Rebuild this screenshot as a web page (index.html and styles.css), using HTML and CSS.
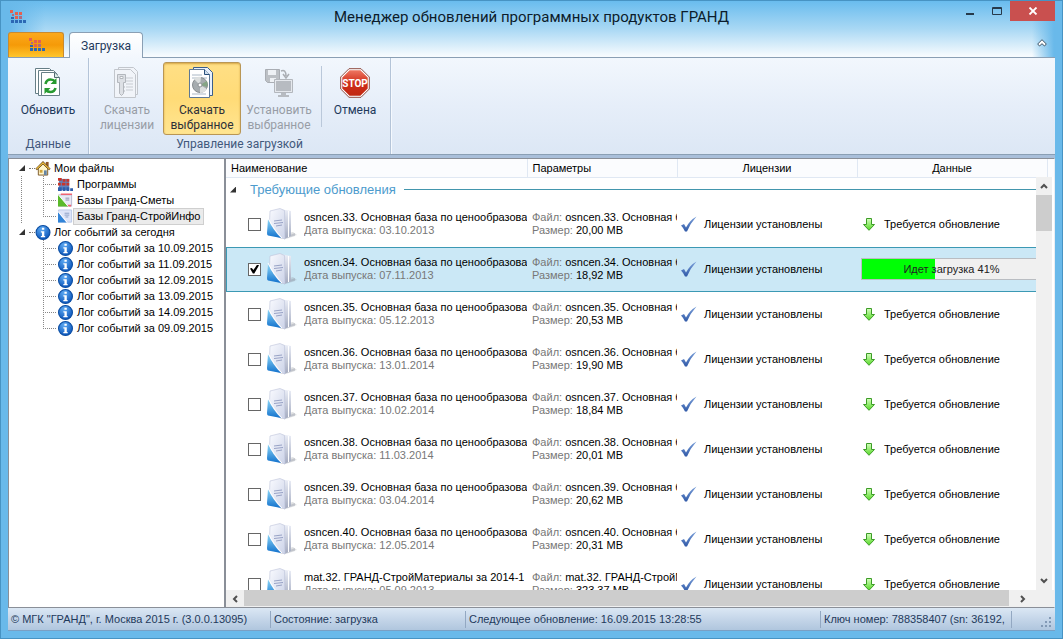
FILE: index.html
```html
<!DOCTYPE html>
<html lang="ru">
<head>
<meta charset="utf-8">
<title>Менеджер обновлений программных продуктов ГРАНД</title>
<link rel="stylesheet" href="styles.css">
</head>
<body>
<svg class="defs" aria-hidden="true">
  <defs>
    <linearGradient id="gPage" x1="0" y1="0" x2="1" y2="1"><stop offset="0" stop-color="#fafbff"/><stop offset="1" stop-color="#ccd3e8"/></linearGradient>
    <linearGradient id="gSide" x1="0" y1="0" x2="0" y2="1"><stop offset="0" stop-color="#eceff8"/><stop offset="1" stop-color="#a3aabf"/></linearGradient>
    <linearGradient id="gBlue" x1="0" y1="0" x2="0" y2="1"><stop offset="0" stop-color="#8fd8f8"/><stop offset="1" stop-color="#1272cd"/></linearGradient>
    <linearGradient id="gCheck" x1="0" y1="0" x2="0" y2="1"><stop offset="0" stop-color="#7ba0da"/><stop offset="1" stop-color="#315aa8"/></linearGradient>
    <linearGradient id="gStop" x1="0" y1="0" x2="0" y2="1"><stop offset="0" stop-color="#ee7661"/><stop offset=".5" stop-color="#cf2d19"/><stop offset="1" stop-color="#c02812"/></linearGradient>
    <linearGradient id="gArrow" x1="0" y1="0" x2="0" y2="1"><stop offset="0" stop-color="#d5ffbe"/><stop offset="1" stop-color="#54d824"/></linearGradient>
    <radialGradient id="gInfo" cx=".4" cy=".25" r=".8"><stop offset="0" stop-color="#5eaaf2"/><stop offset="1" stop-color="#0751b8"/></radialGradient>
  </defs>
  <symbol id="logo" viewBox="0 0 16 14">
    <path fill="#e5604f" d="M0 0h3v3H0zM5 2h3v3H5zM9 2h3v3H9zM5 6h3v3H5z"/>
    <path fill="#b06a80" d="M2 4h2v2H2zM9 6h3v3H9z"/>
    <path fill="#2c68b4" d="M1 7h3v2H1zM1 10h3v3H1zM5 10h3v3H5zM9 10h3v3H9zM13 10h3v3h-3z"/>
  </symbol>
  <symbol id="book" viewBox="0 0 30 32">
    <path fill="#8b8e98" opacity=".28" d="M14 31 30 27 26 24 10 28z"/>
    <path fill="#7f8494" opacity=".3" d="M17 31.500 28 28V25l-10 4z"/>
    <path fill="url(#gSide)" d="M13 1 24 3 24 28 17 31z"/>
    <path stroke="#fff" fill="none" d="M21.500 3v26"/>
    <path fill="url(#gPage)" stroke="#bcc3da" stroke-width=".6" d="M3 3 13 .500 17.500 2.500 18 31 15 30 2 26z"/>
    <path stroke="#8f9abf" stroke-width=".9" fill="none" d="m7 13 8-1M7 15.500l9-1M9 18l6-1"/>
    <path fill="url(#gBlue)" d="M1 11c3 7 8 14 13 19L1 27.500Q0 27 0 25z"/>
    <path stroke="#fff" stroke-width="1" fill="none" d="M1 10c4 8 9 15 14 20"/>
  </symbol>
  <symbol id="check" viewBox="0 0 16 16">
    <path fill="url(#gCheck)" d="M0 9.500 3 8l2 3.500Q9 4 15.500.500 9.500 7 6 15.500H4Q2.500 12 0 9.500z"/>
  </symbol>
  <symbol id="down" viewBox="0 0 12 13">
    <path fill="url(#gArrow)" stroke="#3c9c26" d="M3.500.500h5v6h3L6 12.300.500 6.500h3z"/>
  </symbol>
  <symbol id="info" viewBox="0 0 14 14">
    <circle cx="7" cy="7" r="6.500" fill="url(#gInfo)" stroke="#0b4da2"/>
    <path fill="#fff" d="M6 2.500h2.200v2H6zM5 5.800h3.200v4.400H9v1.300H5v-1.300h1V7H5z"/>
  </symbol>
  <symbol id="home" viewBox="0 0 16 16">
    <path fill="#8d5729" d="M11 1h3v5h-3z"/>
    <path fill="#fff6cc" stroke="#7c5522" d="M3 8 8 3l5 5v7H3z"/>
    <path fill="#6585a5" d="M9 10h3v5H9z"/><path fill="#d0a23a" d="M4.500 9.500h3v3h-3z"/>
    <path fill="none" stroke="#63431c" stroke-width="2.400" d="M.700 9 8 1.700 15.300 9"/><path fill="none" stroke="#f3c440" stroke-width="1.200" d="M1 8.700 8 1.900 15 8.700"/>
  </symbol>
  <symbol id="blocks" viewBox="0 0 16 14">
    <path fill="#5f83bd" d="M1 1h11v12H1z"/>
    <path fill="#ca3428" d="M0 0h4v3H0zM5 1h3v3H5zM4 5h4v3H4zM9 1h3v3H9zM0 5h3v3H0zM9 5h3v3H9z"/>
    <path fill="#2d5dab" d="M0 10h4v4H0zM5 10h3v4H5zM9 10h3v4H9zM13 11h3v3h-3z"/>
  </symbol>
  <symbol id="green-base" viewBox="0 0 16 15">
    <path fill="#e9e9f5" stroke="#b7b9d0" d="M.500 1.500h14v12H.500z"/><path fill="#ef6473" d="M3 0h12v1.500H3zM10 12h4v2h-4z"/>
    <path stroke="#8a91ad" d="M8 5h4M8 7h4"/><path fill="#5aba29" d="M0 1 11 14H0z"/><path stroke="#fff" d="m0 1 11 13"/>
  </symbol>
  <symbol id="blue-base" viewBox="0 0 16 15">
    <path fill="#dde4f8" stroke="#bac8e5" d="M.500.500h14v13H.500z"/><path stroke="#8a9dc2" d="M7 4h5M7 6h5M8 8h3"/>
    <path fill="#3184d8" d="M0 3 9 14H0z"/><path stroke="#fff" d="m0 2 10 12"/>
  </symbol>
  <symbol id="refresh" viewBox="0 0 28 32">
    <g fill="#fff" stroke="#667e86"><path d="M1.500 1.500h14l4 4v21h-18z"/><path d="M4.500 3.500h15l4 4v21h-19z"/><path d="M7.500 5.500h13l5 5v18h-18z"/></g>
    <path fill="#dcebe8" stroke="#526a70" d="M20.500 5.500v5h5"/>
    <path fill="none" stroke="#279a30" stroke-width="2.600" d="M11.500 17q1-4.500 5-4.500 3 0 4.500 2M21.500 21q-1 4-5 4-3 0-4.500-2"/>
    <path fill="#279a30" d="M22.500 11v6h-6zM10.500 27v-6h6z"/>
  </symbol>
  <symbol id="license" viewBox="0 0 28 32">
    <g fill="#f1f4f9" stroke="#c2c6cc"><path d="M5.500.500h15l4 4v23h-19z"/><path d="M1.500 2.500h16l5 5v23h-21z"/></g>
    <path stroke="#c7cbd1" d="M13 11h7M13 14h7M13 17h7M13 20h7M13 23h7"/>
    <path fill="#dde0e5" stroke="#b3b7bd" d="M4.500 7.500h8v8h-2v11l-2 2-2-2v-11h-2z"/><path fill="#fff" stroke="#b3b7bd" d="M7 9.500h3v2H7z"/><path stroke="#b3b7bd" d="M10 20h2M10 24h2"/>
  </symbol>
  <symbol id="disc" viewBox="0 0 28 32">
    <path fill="#e8f0fc" stroke="#3b5e8a" d="M5.500.500h14l5 5v23h-19z"/>
    <path fill="#fff" stroke="#5d7894" d="M1.500 2.500h15l5 5v23h-20z"/><path fill="#cedded" stroke="#294f7c" d="M16.500 2.500v5h5"/>
    <path stroke="#aab7c5" d="M4 8h10M4 11h15M4 27h14"/>
    <circle cx="12" cy="18" r="7.500" fill="#a6acaf" stroke="#888d91"/><path fill="#dcdfdf" d="M12 18 6 12q3-3 7-2zM12 18l7 4q-2 4-7 4z"/><path fill="#85a585" d="m12 18 7-4q1 3 0 6z"/><circle cx="12" cy="18" r="2" fill="#fff" stroke="#8a8e91"/>
  </symbol>
  <symbol id="install" viewBox="0 0 30 30">
    <path fill="#bcc0c5" stroke="#a9adb3" d="M1.500 1.500h14v13h-12l-2-2z"/><path fill="#eef1f5" d="M4 2h8v5H4zM6 10h6v4H6z"/>
    <path fill="none" stroke="#a9adb3" stroke-width="1.500" d="M17 3q5-2 5 5m-3-2 3 4 3-4"/>
    <path fill="#e5e8ed" stroke="#b3b7bd" d="M10.500 11.500h18v13h-18z"/><path fill="#b7bbc1" d="M12 13h15v10H12zM17 25h5v2h3v2H14v-2h3z"/>
  </symbol>
  <symbol id="stop" viewBox="0 0 30 30">
    <path fill="#fff" stroke="#8e4a40" d="M9 .700h12L29.300 9v12L21 29.300H9L.700 21V9z"/><path fill="url(#gStop)" d="M9.600 2.300h10.800l7.300 7.300v10.800l-7.300 7.300H9.600l-7.300-7.300V9.600z"/>
    <text x="15" y="19" text-anchor="middle" class="stop-text">STOP</text>
  </symbol>
</svg>

<main class="window">
  <header class="titlebar">
    <svg class="app-icon"><use href="#logo"/></svg>
    <h1>Менеджер обновлений программных продуктов ГРАНД</h1>
    <div class="window-buttons">
      <button aria-label="Свернуть"><svg viewBox="0 0 10 8"><path fill="#26394a" d="M1 6h8v2H1z"/></svg></button>
      <button aria-label="Развернуть"><svg viewBox="0 0 10 8"><path fill="none" stroke="#26394a" d="M.500.500h9v7h-9zM0 1.500h10"/></svg></button>
      <button class="close" aria-label="Закрыть"><svg viewBox="0 0 10 8"><path fill="none" stroke="#fff" stroke-width="1.800" d="m1.500.500 7 7m0-7-7 7"/></svg></button>
    </div>
  </header>
  <nav class="tabs">
    <button class="app-menu" aria-label="Меню"><svg class="app-icon"><use href="#logo"/></svg></button>
    <button class="tab">Загрузка</button>
    <button class="collapse" aria-label="Свернуть ленту"><svg viewBox="0 0 10 8"><path fill="#fff" stroke="#3e5366" d="M5 .700 9.300 5 7.500 7 5 4.700 2.500 7 .700 5z"/></svg></button>
  </nav>
  <section class="ribbon">
    <div class="group">
      <div class="tools"><button class="tool"><svg><use href="#refresh"/></svg>Обновить</button></div>
      <div class="caption">Данные</div>
    </div>
    <div class="group">
      <div class="tools">
        <button class="tool narrow" disabled><svg><use href="#license"/></svg>Скачать<br>лицензии</button>
        <button class="tool active"><svg><use href="#disc"/></svg>Скачать<br>выбранное</button>
        <button class="tool" disabled><svg><use href="#install"/></svg>Установить<br>выбранное</button>
        <span class="divider"></span>
        <button class="tool cancel"><svg><use href="#stop"/></svg>Отмена</button>
      </div>
      <div class="caption">Управление загрузкой</div>
    </div>
  </section>
  <div class="workspace">
    <aside class="tree">
      <ul>
        <li>
          <div class="node root"><i class="expander"></i><svg><use href="#home"/></svg><span>Мои файлы</span></div>
          <ul>
            <li class="node"><svg><use href="#blocks"/></svg><span>Программы</span></li>
            <li class="node"><svg><use href="#green-base"/></svg><span>Базы Гранд-Сметы</span></li>
            <li class="node selected"><svg><use href="#blue-base"/></svg><span>Базы Гранд-СтройИнфо</span></li>
          </ul>
        </li>
        <li>
          <div class="node root"><i class="expander"></i><svg><use href="#info"/></svg><span>Лог событий за сегодня</span></div>
          <ul>
            <li class="node"><svg><use href="#info"/></svg><span>Лог событий за 10.09.2015</span></li>
            <li class="node"><svg><use href="#info"/></svg><span>Лог событий за 11.09.2015</span></li>
            <li class="node"><svg><use href="#info"/></svg><span>Лог событий за 12.09.2015</span></li>
            <li class="node"><svg><use href="#info"/></svg><span>Лог событий за 13.09.2015</span></li>
            <li class="node"><svg><use href="#info"/></svg><span>Лог событий за 14.09.2015</span></li>
            <li class="node"><svg><use href="#info"/></svg><span>Лог событий за 09.09.2015</span></li>
          </ul>
        </li>
      </ul>
    </aside>
    <section class="list">
      <div class="viewport">
        <table>
          <colgroup><col><col class="c-params"><col class="c-license"><col class="c-data"><col class="c-rest"></colgroup>
          <thead><tr><th>Наименование</th><th>Параметры</th><th class="center">Лицензии</th><th class="center">Данные</th><th></th></tr></thead>
          <tbody id="rows">
            <tr class="group-row"><td colspan="5"><div class="group-title"><i class="expander"></i><span>Требующие обновления</span></div></td></tr>
          </tbody>
        </table>
        <div class="vscroll">
          <button aria-label="Вверх"><svg viewBox="0 0 8 6"><path d="m1 5 3-3 3 3"/></svg></button>
          <div class="thumb"></div>
          <button aria-label="Вниз"><svg viewBox="0 0 8 6"><path d="m1 1 3 3 3-3"/></svg></button>
        </div>
      </div>
      <div class="hscroll">
        <button aria-label="Влево"><svg viewBox="0 0 6 8"><path d="M5 1 2 4l3 3"/></svg></button>
        <div class="thumb"></div>
        <button aria-label="Вправо"><svg viewBox="0 0 6 8"><path d="m1 1 3 3-3 3"/></svg></button>
      </div>
    </section>
  </div>
  <footer class="status">
    <span>© МГК "ГРАНД", г. Москва 2015 г. (3.0.0.13095)</span>
    <span>Состояние: загрузка</span>
    <span>Следующее обновление: 16.09.2015 13:28:55</span>
    <span>Ключ номер: 788358407 (sn: 36192,</span>
    <span class="grip"><svg viewBox="0 0 11 11"><path fill="#8299b5" d="M8 0h2v2H8zM4 4h2v2H4zM8 4h2v2H8zM0 8h2v2H0zM4 8h2v2H4zM8 8h2v2H8z"/></svg></span>
  </footer>
</main>
<script src="rows.js"></script>
</body>
</html>
```

FILE: rows.js
```js
const base = "Основная база по ценообразова";
const baseFile = "Основная б";
const items = [
  ["osncen.33.", base, baseFile, "03.10.2013", "20,00 MB"],
  ["osncen.34.", base, baseFile, "07.11.2013", "18,92 MB", 41],
  ["osncen.35.", base, baseFile, "05.12.2013", "20,53 MB"],
  ["osncen.36.", base, baseFile, "13.01.2014", "19,90 MB"],
  ["osncen.37.", base, baseFile, "10.02.2014", "18,84 MB"],
  ["osncen.38.", base, baseFile, "11.03.2014", "20,01 MB"],
  ["osncen.39.", base, baseFile, "03.04.2014", "20,62 MB"],
  ["osncen.40.", base, baseFile, "12.05.2014", "20,31 MB"],
  ["mat.32.", "ГРАНД-СтройМатериалы за 2014-1", "ГРАНД-СтройМ", "05.09.2013", "323,37 MB"]
];

const data = progress => progress
  ? `<div class="progress" role="progressbar" aria-valuenow="${progress}"><div class="bar" style="width:${progress}%"></div><span>Идет загрузка ${progress}%</span></div>`
  : `<div class="state"><svg class="down"><use href="#down"/></svg>Требуется обновление</div>`;

document.getElementById("rows").insertAdjacentHTML("beforeend", items.map(([code, name, file, date, size, progress]) => `
  <tr class="item${progress ? " current" : ""}">
    <td><label class="product"><input type="checkbox"${progress ? " checked" : ""}><svg class="book"><use href="#book"/></svg><span class="lines">${code} ${name}<br><small>Дата выпуска: ${date}</small></span></label></td>
    <td><div class="lines params"><small>Файл:</small> ${code} ${file}<br><small>Размер:</small> ${size}</div></td>
    <td><div class="state"><svg class="check"><use href="#check"/></svg>Лицензии установлены</div></td>
    <td>${data(progress)}</td>
    <td></td>
  </tr>`).join(""));
```

FILE: styles.css
```css
* { box-sizing: border-box; }
body {
  margin: 0;
  font: 11px/13px "Liberation Sans", Arial, sans-serif;
  color: #000;
}
button { margin: 0; padding: 0; border: 0; background: none; font: inherit; color: inherit; }
ul { list-style: none; margin: 0; padding: 0; }
svg { display: block; flex: none; }
.defs { position: absolute; width: 0; height: 0; }

.window {
  height: 100vh;
  display: flex;
  flex-direction: column;
  padding: 0 7px 7px;
  border: 1px solid #4793c3;
  background:
    linear-gradient(90deg, #69b9ea 8px, #69b9ea00 44px, #69b9ea00 calc(100% - 30px), #69b9ea calc(100% - 8px)) top / 100% 57px no-repeat,
    linear-gradient(#69bcee, #a9d8f4 28px, #f7fbfe 55px) top / 100% 57px no-repeat,
    #69b9ea;
}

/* Title bar */
.titlebar { flex: none; height: 31px; display: grid; grid-template-columns: 120px 1fr 120px; align-items: center; }
.app-icon { width: 16px; height: 14px; margin-left: 2px; }
h1 { margin: 0; text-align: center; font: 15px/20px Roboto, sans-serif; color: #0c1c2b; white-space: nowrap; }
.window-buttons { display: flex; justify-content: flex-end; align-self: start; }
.window-buttons button { width: 27px; height: 20px; display: grid; place-items: center; }
.window-buttons svg { width: 10px; height: 8px; }
.window-buttons .close { width: 45px; background: #c9504f; }

/* Tabs */
.tabs { flex: none; height: 25px; display: flex; align-items: flex-end; gap: 5px; font: 12px/16px Roboto, sans-serif; }
.app-menu {
  width: 56px; height: 25px; display: grid; place-items: center;
  border: 1px solid #c88a30; border-bottom: 0; border-radius: 3px 3px 0 0;
  background: linear-gradient(#fba91c, #f59a08 50%, #ffc62c);
}
.tab {
  height: 26px; padding: 0 11px; margin-bottom: -1px; z-index: 1; color: #1e395b;
  border: 1px solid #8a9fb4; border-bottom: 0; border-radius: 4px 4px 0 0;
  background: linear-gradient(#fff, #f2f7fd);
}
.collapse { margin: 0 8px 10px auto; }
.collapse svg { width: 10px; height: 8px; }

/* Ribbon */
.ribbon {
  flex: none; height: 98px; display: flex; color: #1e395b;
  font: 12px/15px Roboto, sans-serif;
  border: 1px solid #8a9fb4; border-width: 1px 0;
  background: linear-gradient(#f2f7fd, #e6eef9 50%, #dce7f5);
}
.group { padding: 4px 2px 0; border-right: 1px solid #b4c4d8; box-shadow: 1px 0 #f5f9fe; }
.tools { display: flex; height: 73px; }
.caption { line-height: 18px; text-align: center; color: #42597c; }
.tool { width: 76px; display: flex; flex-direction: column; align-items: center; padding-top: 5px; white-space: nowrap; }
.tool svg { width: 30px; height: 32px; margin-bottom: 4px; }
.tool:disabled { color: #989da6; }
.tool.narrow { width: 72px; }
.tool.active {
  width: 78px; padding-top: 4px; color: #2d3038; border: 1px solid #b99655; border-radius: 3px;
  background: linear-gradient(#ffdf85, #ffdb77 50%, #ffe591); box-shadow: inset 0 1px 2px #d5a646;
}
.tool.cancel { width: 66px; }
.divider { width: 1px; margin: 4px 0 8px 4px; background: #bac8da; }
.stop-text { font: bold 10px Roboto, sans-serif; fill: #fff; }

/* Work area */
.workspace {
  flex: 1; min-height: 0; display: grid; grid-template-columns: 217px minmax(0, 1fr);
  padding-top: 3px; background: #a9bfda;
}
.tree, .list { border: 1px solid #8a8f98; background: #fff; min-height: 0; overflow: hidden; }
.tree { padding: 1px 0 0 9px; }
.node { display: flex; align-items: center; height: 16px; white-space: nowrap; }
.node svg { width: 15px; height: 15px; }
.node span { padding: 0 3px; margin-left: 1px; line-height: 15px; }
.root span { margin-left: 0; }
.root svg { width: 16px; }
.expander { flex: none; width: 6px; height: 6px; background: #333; clip-path: polygon(100% 0, 100% 100%, 0 100%); }
.root .expander { margin: 0 4px 0 1px; }
.root::after { content: ""; order: 1; width: 6px; border-top: 1px dotted #777; }
.root svg, .root span { order: 2; }
.tree ul ul { padding-left: 25px; }
.tree li:not(:last-child) > ul { background: repeating-linear-gradient(#888 0 1px, #fff 1px 2px) 3px 0 / 1px 100% no-repeat; }
.tree ul ul .node::before {
  content: ""; width: 14px; height: 16px; margin-right: 1px;
  background:
    repeating-linear-gradient(#888 0 1px, #fff 1px 2px) 0 0 / 1px 100% no-repeat,
    repeating-linear-gradient(90deg, #888 0 1px, #fff 1px 2px) 0 8px / 100% 1px no-repeat;
}
.tree ul ul .node:last-child::before { background-size: 1px 8px, 100% 1px; }
.selected span { background: #ebebeb; outline: 1px solid #cfcfcf; }

.list { display: flex; flex-direction: column; border-right-color: #e9edf3; }
.viewport { flex: 1; min-height: 0; overflow: hidden; position: relative; }
table { width: 100%; table-layout: fixed; border-collapse: collapse; }
.c-params { width: 150px; }
.c-license { width: 180px; }
.c-data { width: 190px; }
.c-rest { width: 7px; }
th { height: 18px; padding: 2px 5px 0; font-weight: normal; text-align: left; background: #fbfcfe; border: solid #e0e8f3; border-width: 0 1px 1px 0; }
th:last-child { border-right: 0; padding: 0; }
th.center { text-align: center; }
td { padding: 0; overflow: hidden; white-space: nowrap; }
.group-title { display: flex; align-items: center; height: 24px; padding-left: 4px; color: #4d9bcd; font-size: 13px; }
.group-title span { margin: 0 8px 0 14px; }
.group-title::after { content: ""; flex: 1; height: 1px; background: #4396ad; }
.item td { height: 45px; }
.current td { background: #cbe8f6; box-shadow: inset 0 1px #3c99b4, inset 0 -1px #3c99b4; }
.current td:first-child { box-shadow: inset 0 1px #3c99b4, inset 0 -1px #3c99b4, inset 1px 0 #3c99b4; }
.product { display: flex; align-items: center; padding-left: 22px; }
.book { width: 30px; height: 32px; margin: 0 7px 0 6px; }
.lines { min-width: 0; overflow: hidden; }
small { font-size: 11px; color: #777; }
.params { padding-left: 5px; }
.state { display: flex; align-items: center; padding-left: 4px; }
.check { width: 16px; height: 16px; margin-right: 7px; }
.down { width: 12px; height: 13px; margin: 0 9px 0 2px; }
.product input {
  appearance: none; flex: none; width: 13px; height: 13px; margin: 0;
  border: 1px solid #666; background: #fff; display: grid; place-items: center;
}
.product input:checked::before { content: ""; width: 9px; height: 9px; background: #000; clip-path: polygon(0 45%, 20% 40%, 38% 62%, 80% 0, 100% 8%, 48% 100%, 32% 100%); }
.progress { display: grid; height: 22px; margin: 0 5px 0 4px; border: 1px solid #b9bdc2; background: #f0f0f0; align-items: center; }
.progress > * { grid-area: 1 / 1; }
.progress .bar { height: 100%; background: #00ff05; }
.progress span { text-align: center; color: #222; }

/* Scroll bars */
.vscroll { position: absolute; top: 18px; right: 0; bottom: 0; width: 18px; display: flex; flex-direction: column; background: #f0f0f0; border-right: 2px solid #fff; }
.vscroll button { height: 18px; display: grid; place-items: center; }
.vscroll .thumb { height: 36px; margin-bottom: auto; background: #cdcdcd; }
.vscroll svg { width: 8px; height: 6px; }
.hscroll { flex: none; height: 17px; display: flex; background: #f0f0f0; padding-right: 18px; }
.hscroll button { width: 18px; display: grid; place-items: center; }
.hscroll button:last-child { width: 27px; }
.hscroll .thumb { flex: 1; margin-bottom: 1px; background: #cdcdcd; }
.hscroll svg { width: 6px; height: 8px; }
.vscroll path, .hscroll path { fill: none; stroke: #505050; stroke-width: 2; }

/* Status bar */
.status {
  flex: none; height: 23px; display: grid; grid-template-columns: 263px 195px 1fr 191px 43px; align-items: center;
  color: #1e395b; white-space: nowrap; border-bottom: 1px solid #799fc4;
  background: linear-gradient(#dbe7f4, #c5d6e9 50%, #b0c6de);
}
.status span { padding: 2px 3px; overflow: hidden; border-right: 1px solid #93a8c2; }
.status .grip { border: 0; display: flex; justify-content: flex-end; align-self: end; }
.grip svg { width: 11px; height: 11px; }
```
